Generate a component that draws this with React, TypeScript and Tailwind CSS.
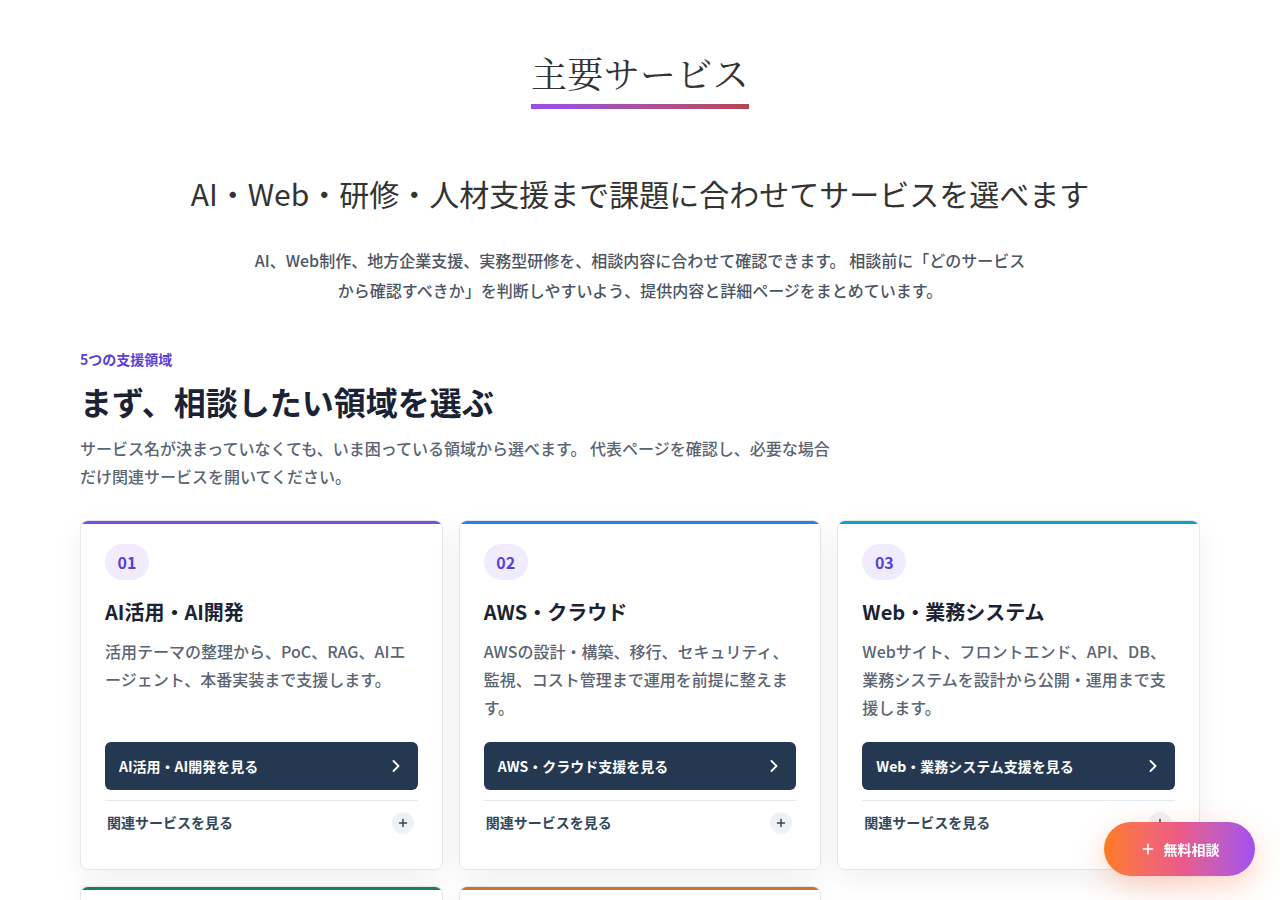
import { ChevronRight, Plus } from 'lucide-react';

const sans = { fontFamily: '"Noto Sans CJK JP", "Noto Sans", sans-serif' };

const services = [
    {
        no: '01',
        title: 'AI活用・AI開発',
        desc: '活用テーマの整理から、PoC、RAG、AIエージェント、本番実装まで支援します。',
        cta: 'AI活用・AI開発を見る',
        bar: 'bg-[#7a4ce0]',
    },
    {
        no: '02',
        title: 'AWS・クラウド',
        desc: 'AWSの設計・構築、移行、セキュリティ、監視、コスト管理まで運用を前提に整えます。',
        cta: 'AWS・クラウド支援を見る',
        bar: 'bg-[#2f7ee5]',
    },
    {
        no: '03',
        title: 'Web・業務システム',
        desc: 'Webサイト、フロントエンド、API、DB、業務システムを設計から公開・運用まで支援します。',
        cta: 'Web・業務システム支援を見る',
        bar: 'bg-[#0aa3c2]',
    },
    {
        no: '04',
        title: '地方企業支援',
        desc: '地域の企業が抱える人材・IT・業務改善の課題を、現場に合わせて伴走支援します。',
        cta: '地方企業支援を見る',
        bar: 'bg-[#1e7d5a]',
    },
    {
        no: '05',
        title: '実務型研修',
        desc: '現場ですぐ使えるAI・クラウド・開発の実務型研修を、目的に合わせて設計します。',
        cta: '実務型研修を見る',
        bar: 'bg-[#d96c2e]',
    },
];

const ServiceCard = ({ s }: { s: (typeof services)[number] }) => (
    <div className="flex flex-col overflow-hidden rounded-lg border border-[#e3e6eb] bg-white shadow-[0_10px_30px_rgba(15,23,42,0.06)]">
        <div className={`h-[3px] ${s.bar}`} />
        <div className="flex flex-1 flex-col px-6 pt-5 pb-[25px]">
            <div className="flex h-9 w-11 items-center justify-center rounded-full bg-[#f0ecfd] text-[16px] font-bold text-[#5b3fd6]">
                {s.no}
            </div>
            <h3 className="mt-[18px] text-[20px] leading-[28px] font-bold text-[#1a2233]">{s.title}</h3>
            <p className="mt-[11px] min-h-[84px] flex-1 text-[16px] leading-[28px] font-medium text-[#5a6473]">
                {s.desc}
            </p>
            <a className="mt-[21px] flex h-12 items-center justify-between rounded-md bg-[#253852] pr-3 pl-[14px] text-[14px] font-bold text-white">
                {s.cta}
                <ChevronRight className="h-5 w-5" strokeWidth={2.2} />
            </a>
            <div className="mt-[10px] flex h-[44px] items-center justify-between border-t border-[#e5e8ec] pr-1 pl-[2px]">
                <span className="text-[14px] font-bold text-[#33475b]">関連サービスを見る</span>
                <span className="flex h-[22px] w-[22px] items-center justify-center rounded-full bg-[#eef2f6] text-[#33475b]">
                    <Plus className="h-3 w-3" strokeWidth={3} />
                </span>
            </div>
        </div>
    </div>
);

export default function App() {
    return (
        <div className="min-h-screen bg-white pb-20" style={sans}>
            <section className="mx-auto w-[1120px] pt-[52px]">
                {/* Section title */}
                <div className="flex flex-col items-center">
                    <div className="inline-flex flex-col items-stretch">
                        <h2
                            className="text-[36px] leading-[48px] font-normal tracking-[0.01em] text-[#333]"
                            style={{ fontFamily: '"Liberation Serif", "Noto Serif CJK JP", "Noto Sans CJK JP", serif' }}
                        >
                            主要サービス
                        </h2>
                        <div className="mt-1 h-[5px] bg-gradient-to-r from-[#9b4de8] to-[#b8444e]" />
                    </div>
                </div>

                <p className="mt-[64px] text-center text-[30px] leading-[40px] font-normal text-[#333]">
                    AI・Web・研修・人材支援まで課題に合わせてサービスを選べます
                </p>
                <p className="mx-auto mt-8 w-[780px] text-center text-[16px] leading-[30px] font-medium text-[#4b5563]">
                    AI、Web制作、地方企業支援、実務型研修を、相談内容に合わせて確認できます。 相談前に「どのサービスから確認すべきか」を判断しやすいよう、提供内容と詳細ページをまとめています。
                </p>

                {/* Areas */}
                <div className="mt-[44px]">
                    <p className="text-[14px] leading-[20px] font-bold text-[#5b3fd6]">5つの支援領域</p>
                    <h2 className="mt-[10px] text-[32px] leading-[44px] font-bold text-[#1a2233]">まず、相談したい領域を選ぶ</h2>
                    <p className="mt-[11px] w-[760px] text-[16px] leading-[28px] font-medium text-[#5a6473]">
                        サービス名が決まっていなくても、いま困っている領域から選べます。 代表ページを確認し、必要な場合だけ関連サービスを開いてください。
                    </p>
                </div>

                <div className="mt-[30px] grid grid-cols-3 gap-4">
                    {services.map((s) => (
                        <ServiceCard key={s.no} s={s} />
                    ))}
                </div>
            </section>

            {/* Floating CTA */}
            <a className="fixed right-[25px] bottom-[24px] flex h-[54px] w-[151px] items-center justify-center gap-2 rounded-full bg-gradient-to-r from-[#ff7b16] via-[#ec5a86] to-[#a24ef0] text-[14px] font-bold text-white shadow-[0_10px_30px_rgba(255,110,60,0.3)]">
                <Plus className="h-4 w-4" strokeWidth={2.5} />
                無料相談
            </a>
        </div>
    );
}
